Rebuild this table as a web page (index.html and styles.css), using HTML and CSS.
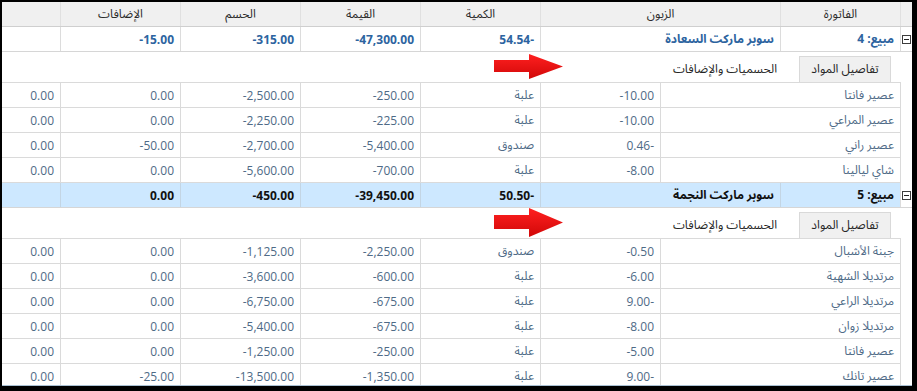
FILE: index.html
```html
<!DOCTYPE html>
<html lang="ar">
<head>
<meta charset="utf-8">
<title>المبيعات</title>
<link rel="stylesheet" href="styles.css">
</head>
<body>
<div class="frame" dir="rtl">
  <div class="row head">
    <div class="c exp"></div>
    <div class="c">الفاتورة</div>
    <div class="c">الزبون</div>
    <div class="c">الكمية</div>
    <div class="c">القيمة</div>
    <div class="c">الحسم</div>
    <div class="c">الإضافات</div>
    <div class="c last"></div>
  </div>

  <div class="row group">
    <div class="c exp"><span class="toggle"></span></div>
    <div class="c">مبيع: 4</div>
    <div class="c">سوبر ماركت السعادة</div>
    <div class="c num"><bdo dir="ltr">54.54-</bdo></div>
    <div class="c num"><bdo dir="ltr">-47,300.00</bdo></div>
    <div class="c num"><bdo dir="ltr">-315.00</bdo></div>
    <div class="c num"><bdo dir="ltr">-15.00</bdo></div>
    <div class="c last"></div>
  </div>

  <div class="detail">
    <div class="tabs">
      <div class="tab active">تفاصيل المواد</div>
      <div class="tab">الحسميات والإضافات</div>
      <svg class="arrow" viewBox="0 0 70 25" preserveAspectRatio="none" aria-hidden="true">
        <defs>
          <linearGradient id="rg1" x1="0" y1="0" x2="0" y2="1">
            <stop offset="0" stop-color="#ff2020"/>
            <stop offset="1" stop-color="#d10808"/>
          </linearGradient>
        </defs>
        <polygon points="0,6 35,6 35,0 69,12.5 35,25 35,18 0,18" fill="url(#rg1)"/>
      </svg>
    </div>
    <div class="drow"><div class="c">عصير فانتا</div><div class="c num"><bdo dir="ltr">-10.00</bdo></div><div class="c">علبة</div><div class="c num"><bdo dir="ltr">-250.00</bdo></div><div class="c num"><bdo dir="ltr">-2,500.00</bdo></div><div class="c num"><bdo dir="ltr">0.00</bdo></div><div class="c num last"><bdo dir="ltr">0.00</bdo></div></div>
    <div class="drow"><div class="c">عصير المراعي</div><div class="c num"><bdo dir="ltr">-10.00</bdo></div><div class="c">علبة</div><div class="c num"><bdo dir="ltr">-225.00</bdo></div><div class="c num"><bdo dir="ltr">-2,250.00</bdo></div><div class="c num"><bdo dir="ltr">0.00</bdo></div><div class="c num last"><bdo dir="ltr">0.00</bdo></div></div>
    <div class="drow"><div class="c">عصير راني</div><div class="c num"><bdo dir="ltr">0.46-</bdo></div><div class="c">صندوق</div><div class="c num"><bdo dir="ltr">-5,400.00</bdo></div><div class="c num"><bdo dir="ltr">-2,700.00</bdo></div><div class="c num"><bdo dir="ltr">-50.00</bdo></div><div class="c num last"><bdo dir="ltr">0.00</bdo></div></div>
    <div class="drow"><div class="c">شاي ليالينا</div><div class="c num"><bdo dir="ltr">-8.00</bdo></div><div class="c">علبة</div><div class="c num"><bdo dir="ltr">-700.00</bdo></div><div class="c num"><bdo dir="ltr">-5,600.00</bdo></div><div class="c num"><bdo dir="ltr">0.00</bdo></div><div class="c num last"><bdo dir="ltr">0.00</bdo></div></div>
  </div>

  <div class="row group sel">
    <div class="c exp"><span class="toggle"></span></div>
    <div class="c">مبيع: 5</div>
    <div class="c">سوبر ماركت النجمة</div>
    <div class="c num"><bdo dir="ltr">50.50-</bdo></div>
    <div class="c num"><bdo dir="ltr">-39,450.00</bdo></div>
    <div class="c num"><bdo dir="ltr">-450.00</bdo></div>
    <div class="c num"><bdo dir="ltr">0.00</bdo></div>
    <div class="c last"></div>
  </div>

  <div class="detail">
    <div class="tabs">
      <div class="tab active">تفاصيل المواد</div>
      <div class="tab">الحسميات والإضافات</div>
      <svg class="arrow big" viewBox="0 0 70 25" preserveAspectRatio="none" aria-hidden="true">
        <defs>
          <linearGradient id="rg2" x1="0" y1="0" x2="0" y2="1">
            <stop offset="0" stop-color="#ff2020"/>
            <stop offset="1" stop-color="#d10808"/>
          </linearGradient>
        </defs>
        <polygon points="0,6 35,6 35,0 69,12.5 35,25 35,18 0,18" fill="url(#rg2)"/>
      </svg>
    </div>
    <div class="drow"><div class="c">جبنة الأشبال</div><div class="c num"><bdo dir="ltr">-0.50</bdo></div><div class="c">صندوق</div><div class="c num"><bdo dir="ltr">-2,250.00</bdo></div><div class="c num"><bdo dir="ltr">-1,125.00</bdo></div><div class="c num"><bdo dir="ltr">0.00</bdo></div><div class="c num last"><bdo dir="ltr">0.00</bdo></div></div>
    <div class="drow"><div class="c">مرتديلا الشهية</div><div class="c num"><bdo dir="ltr">-6.00</bdo></div><div class="c">علبة</div><div class="c num"><bdo dir="ltr">-600.00</bdo></div><div class="c num"><bdo dir="ltr">-3,600.00</bdo></div><div class="c num"><bdo dir="ltr">0.00</bdo></div><div class="c num last"><bdo dir="ltr">0.00</bdo></div></div>
    <div class="drow"><div class="c">مرتديلا الراعي</div><div class="c num"><bdo dir="ltr">9.00-</bdo></div><div class="c">علبة</div><div class="c num"><bdo dir="ltr">-675.00</bdo></div><div class="c num"><bdo dir="ltr">-6,750.00</bdo></div><div class="c num"><bdo dir="ltr">0.00</bdo></div><div class="c num last"><bdo dir="ltr">0.00</bdo></div></div>
    <div class="drow"><div class="c">مرتديلا زوان</div><div class="c num"><bdo dir="ltr">-8.00</bdo></div><div class="c">علبة</div><div class="c num"><bdo dir="ltr">-675.00</bdo></div><div class="c num"><bdo dir="ltr">-5,400.00</bdo></div><div class="c num"><bdo dir="ltr">0.00</bdo></div><div class="c num last"><bdo dir="ltr">0.00</bdo></div></div>
    <div class="drow"><div class="c">عصير فانتا</div><div class="c num"><bdo dir="ltr">-5.00</bdo></div><div class="c">علبة</div><div class="c num"><bdo dir="ltr">-250.00</bdo></div><div class="c num"><bdo dir="ltr">-1,250.00</bdo></div><div class="c num"><bdo dir="ltr">0.00</bdo></div><div class="c num last"><bdo dir="ltr">0.00</bdo></div></div>
    <div class="drow"><div class="c">عصير تانك</div><div class="c num"><bdo dir="ltr">9.00-</bdo></div><div class="c">علبة</div><div class="c num"><bdo dir="ltr">-1,350.00</bdo></div><div class="c num"><bdo dir="ltr">-13,500.00</bdo></div><div class="c num"><bdo dir="ltr">-25.00</bdo></div><div class="c num last"><bdo dir="ltr">0.00</bdo></div></div>
  </div>
</div>
</body>
</html>
```

FILE: styles.css
```css
* { box-sizing: border-box; }

html, body {
  margin: 0;
  background: #000;
}

body {
  width: 917px;
  height: 391px;
  padding: 2px 0 0 2px;
  overflow: hidden;
}

.frame {
  width: 910px;
  height: 384px;
  background: #fff;
  overflow: hidden;
  border-bottom: 1px solid #a9c0d2;
  font-family: "Segoe UI", "Open Sans", "Noto Sans Arabic", "DejaVu Sans", sans-serif;
  font-size: 12px;
}

.row {
  display: grid;
  grid-template-columns: 12px 120px 240px 120px 120px 120px 120px 58px;
  height: 25px;
  border-bottom: 1px solid #d6d6d6;
}

.c {
  display: flex;
  align-items: center;
  justify-content: flex-start;
  padding: 0 6px;
  border-left: 1px solid #dcdcdc;
  white-space: nowrap;
  overflow: hidden;
}

.c.last { border-left: none; }

.head {
  background: #f0f0f0;
  color: #2b2b2b;
  border-bottom-color: #cfcfcf;
}

.head .c {
  justify-content: center;
  border-left-color: #e0e0e0;
}

.group {
  color: #2d64a0;
  font-weight: bold;
}

.group.sel {
  background: #cde8ff;
  color: #111;
}

.group.sel .c { border-left-color: #c3d5e4; }

.group.sel .exp { background: #fff; border-left-color: #dcdcdc; }

.exp {
  padding: 0 1px 0 0;
}

.head .exp { justify-content: flex-start; }

.toggle {
  position: relative;
  width: 9px;
  height: 9px;
  border: 1px solid #3c3c3c;
  background: #fff;
}

.toggle::after {
  content: "";
  position: absolute;
  left: 1px;
  right: 1px;
  top: 3px;
  height: 1px;
  background: #222;
}

.detail {
  margin-right: 11px;
}

.tabs {
  position: relative;
  display: flex;
  align-items: flex-end;
  height: 31px;
  padding-right: 10px;
  border-bottom: 1px solid #dadada;
}

.tab {
  display: flex;
  align-items: center;
  height: 26px;
  padding: 0 22px 0 11px;
  color: #262626;
  white-space: nowrap;
}

.tab.active {
  justify-content: center;
  width: 92px;
  padding: 0;
  background: #f0f0f0;
  border: 1px solid #d9d9d9;
  border-bottom: none;
}

.arrow {
  position: absolute;
  left: 492px;
  top: 2px;
  width: 70px;
  height: 25px;
}

.arrow.big {
  top: 0;
  height: 29px;
}

.drow {
  display: grid;
  grid-template-columns: 241px 120px 120px 120px 120px 120px 58px;
  height: 25px;
  border-bottom: 1px solid #dadada;
  color: #4e6a86;
}

.drow .c { border-left-color: #dadada; }

.drow .c:first-child { border-right: 1px solid #dadada; }
```
